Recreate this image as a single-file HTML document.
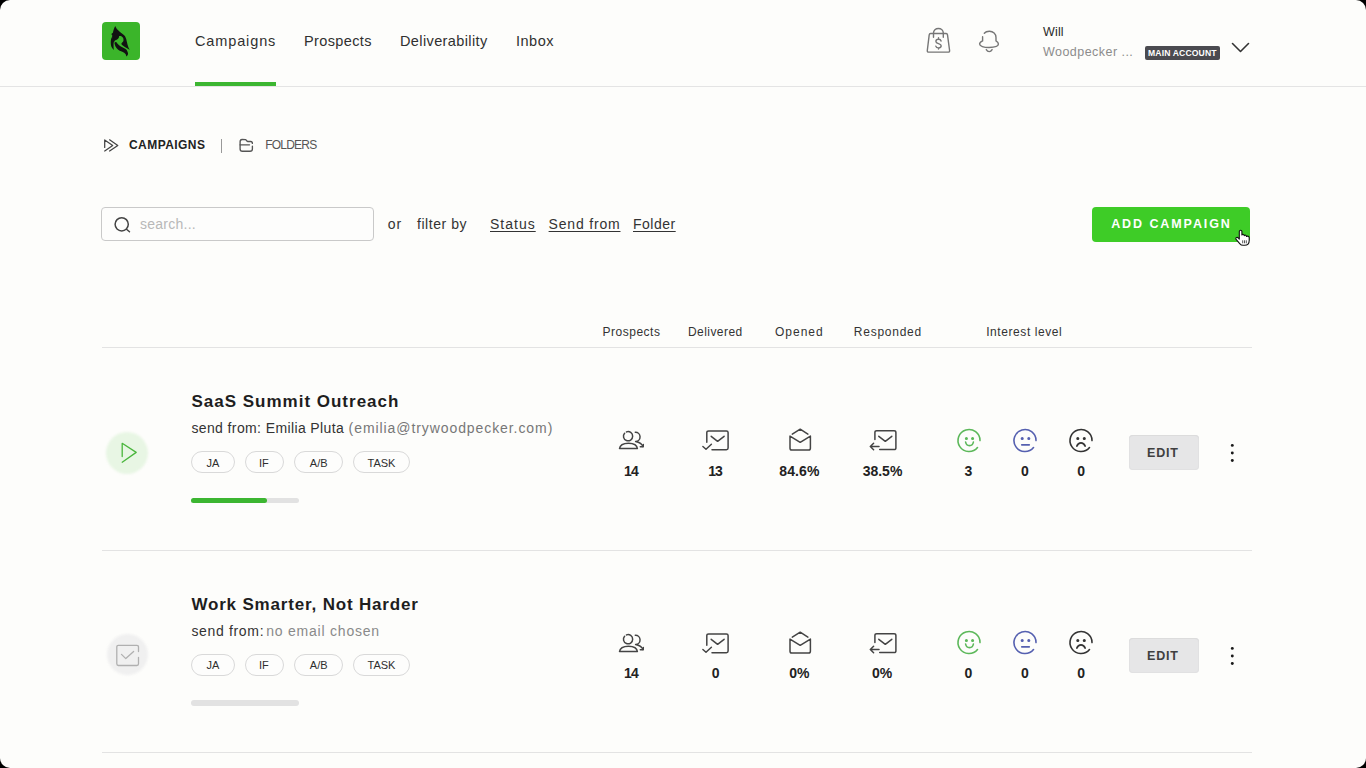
<!DOCTYPE html>
<html><head><meta charset="utf-8"><style>
html{margin:0;padding:0;background:#000;}
body{margin:0;padding:0;width:1366px;height:768px;overflow:hidden;position:relative;border-radius:10px;background:#fdfdfb;font-family:"Liberation Sans",sans-serif;}
.t{position:absolute;white-space:nowrap;line-height:1;}
svg{overflow:visible}
</style></head><body>
<div style="position:absolute;left:102px;top:22px;width:38px;height:38px;border-radius:4px;background:#3bb52a"></div>
<svg style="position:absolute;left:102px;top:22px" width="38" height="38" viewBox="0 0 38 38"><g fill="#121212"><path d="M13.3,4 C14,6 14.8,7 15.7,7.8 C16.8,9 18,10 19.3,10.9 C20.5,11.7 21.5,12.5 22.4,13.5 C23,14.2 23.4,15 23.7,15.7 C24.2,16.8 24.5,17.8 24.6,18.8 C24.9,20 25.2,21.2 25.5,22.4 C26,24.5 26.8,26.5 27.7,28.1 C26.8,27.2 25.7,26.4 24.6,25.9 C23.4,25.2 22.2,24.5 21.1,23.7 C20.4,23.1 19.8,22.5 19.3,21.9 C19.6,21.4 19.9,21 20.2,20.6 C21,19.8 21.5,18.8 21.5,17.9 C21.5,16.8 21.2,15.9 20.6,15.3 C20.1,14.5 19.4,14.1 18.8,14 L17.1,14 C17.1,14.8 16.9,15.6 16.5,16.3 C15.8,17.2 14.7,17.8 13.5,18.3 L11.3,19 L10,15.3 L10.3,13.6 L9.3,12.1 L10.9,10.7 C11.1,9.5 11.4,8.3 11.8,7.3 C12.2,6.1 12.7,5 13.3,4 Z"/><path d="M9.8,15.3 C8.8,17 8.6,19.5 8.9,22.8 C9.1,24.6 10.2,26.7 11.9,27.9 C11.6,26 11.5,25 11.6,24.1 C11.5,22.5 11.5,21 11.8,20.2 C12.1,19.5 12.5,19.1 13,18.7 Z"/><path d="M12.4,20.8 C12.8,24 14.5,26.5 16.2,27.8 C18.2,29.2 20.2,29.7 21.2,30.2 C22.7,31 23.6,31.8 23.8,32.6 L24.4,34.6 C26,33.2 26.4,31.8 25.8,30.6 C25.3,29.2 24.9,28.3 24.2,27.6 C23,26.4 21.6,25.8 20.3,25.3 C18.6,24.4 17.3,23.6 16.3,22.6 C15.6,21.8 15.1,21 14.6,20.4 C14,19.9 13,20.1 12.4,20.8 Z"/></g></svg>
<div style="position:absolute;left:0;top:86px;width:1366px;height:1px;background:#e4e4e4"></div>
<div style="position:absolute;left:195px;top:82px;width:81px;height:4px;background:#3cb631"></div>
<svg style="position:absolute;left:924px;top:26px" width="30" height="30" viewBox="0 0 30 30"><g fill="none" stroke="#767676" stroke-width="1.4" stroke-linecap="round" stroke-linejoin="round"><path d="M6.6,7.5 L22.1,7.5 C22.9,7.5 23.4,8 23.5,8.8 L25.6,24.5 C25.7,25.5 25.2,26.1 24.2,26.1 L4.7,26.1 C3.7,26.1 3.2,25.5 3.3,24.5 L5.2,8.8 C5.3,8 5.8,7.5 6.6,7.5 Z"/><path d="M9.5,11.2 L9.5,7 C9.5,4.4 11.6,2.5 14.4,2.5 C17.2,2.5 19.3,4.4 19.3,7 L19.3,11.2"/><path d="M17.1,15 C16.8,13.9 15.8,13.3 14.5,13.3 C12.9,13.3 11.9,14.1 11.9,15.4 C11.9,18.2 17.2,17 17.2,19.8 C17.2,21.1 16.1,21.9 14.5,21.9 C13.1,21.9 12.1,21.2 11.8,20.1 M14.5,11.7 L14.5,13.3 M14.5,21.9 L14.5,23"/></g></svg>
<svg style="position:absolute;left:976px;top:28px" width="26" height="26" viewBox="0 0 26 26"><g fill="none" stroke="#767676" stroke-width="1.4" stroke-linecap="round"><path d="M8.3,5.2 C9.4,3.9 11.3,3.3 13.4,3.3 C17.2,3.3 20,6 20,9.5 L20,12.8 C21.5,13.6 22.4,14.8 22.4,16.1 C22.4,18.2 18.2,19.5 13,19.5 C7.8,19.5 3.6,18.2 3.6,16.1 C3.6,14.8 4.9,13.6 6.6,12.8 L6.6,8.8"/><path d="M10.3,21.6 C11,22.9 12,23.6 13.2,23.6 C14.4,23.6 15.4,22.9 16.1,21.6"/></g></svg>
<div style="position:absolute;left:1145px;top:46px;width:75px;height:14px;border-radius:2px;background:#4b4b50"></div>
<svg style="position:absolute;left:1230px;top:40px" width="22" height="16" viewBox="0 0 22 16"><path d="M2.5,3.5 L10.5,11.5 L18.5,3.5" fill="none" stroke="#333" stroke-width="1.6" stroke-linecap="round" stroke-linejoin="round"/></svg>
<svg style="position:absolute;left:100px;top:136px" width="22" height="20" viewBox="0 0 22 20"><g fill="none" stroke="#444" stroke-width="1.25" stroke-linecap="round" stroke-linejoin="round"><path d="M4.7,11.4 L4.7,3.9 L12.7,9.4 L4.7,15"/><path d="M9.6,3.8 L17.8,9.4 L9.6,15"/></g></svg>
<div style="position:absolute;left:220.5px;top:139px;width:1.3px;height:14px;background:#999"></div>
<svg style="position:absolute;left:236px;top:136px" width="20" height="20" viewBox="0 0 20 20"><g fill="none" stroke="#555" stroke-width="1.35" stroke-linecap="round" stroke-linejoin="round"><path d="M16.4,7.4 C16.4,6.3 15.8,5.5 14.6,5.5 L11.75,5.5 C11,5.5 10.6,4.1 9.5,3.6 L6.1,3.5 C4.8,3.5 4.1,4.4 4.1,5.8 L4.1,13 C4.1,14.4 4.9,15.2 6.4,15.2 L14,15.2 C15.6,15.2 16.4,14.4 16.4,13 L16.4,10.2"/><path d="M4.1,8.8 L13.5,8.8"/></g></svg>
<div style="position:absolute;left:101px;top:207px;width:271px;height:32px;border:1px solid #c9c9c9;border-radius:4px;background:#fdfdfc"></div>
<svg style="position:absolute;left:110px;top:213px" width="24" height="24" viewBox="0 0 24 24"><g fill="none" stroke="#444" stroke-width="1.5" stroke-linecap="round"><circle cx="11.7" cy="11.3" r="6.6"/><path d="M16.5,16.2 L19.5,18.8"/></g></svg>
<div style="position:absolute;left:1092px;top:207px;width:158px;height:35px;border-radius:4px;background:#3ecc27"></div>
<div style="position:absolute;left:102px;top:347px;width:1150px;height:1px;background:#e3e3e3"></div>
<div style="position:absolute;left:106.4px;top:431.7px;width:42px;height:42px;border-radius:50%;background:#e8f6e4;filter:blur(1px)"></div>
<svg style="position:absolute;left:116px;top:440px" width="26" height="26" viewBox="0 0 26 26"><path d="M6.2,16.6 L6.2,3.3 L20.2,12.4 L6.2,22.2" fill="none" stroke="#4ab63d" stroke-width="1.3" stroke-linecap="round" stroke-linejoin="round"/></svg>
<div style="position:absolute;left:191px;top:451.4px;width:42.0px;height:20px;border:1px solid #d9d9d9;border-radius:11px;background:#fdfdfc"></div>
<div style="position:absolute;left:245px;top:451.4px;width:36.6px;height:20px;border:1px solid #d9d9d9;border-radius:11px;background:#fdfdfc"></div>
<div style="position:absolute;left:294px;top:451.4px;width:47.4px;height:20px;border:1px solid #d9d9d9;border-radius:11px;background:#fdfdfc"></div>
<div style="position:absolute;left:353px;top:451.4px;width:55.0px;height:20px;border:1px solid #d9d9d9;border-radius:11px;background:#fdfdfc"></div>
<div style="position:absolute;left:191px;top:497.8px;width:108px;height:5.4px;border-radius:3px;background:#e2e2e2"></div>
<div style="position:absolute;left:191px;top:497.8px;width:75.5px;height:5.4px;border-radius:3px;background:#3cb631"></div>
<svg style="position:absolute;left:612px;top:424px" width="40" height="32" viewBox="0 0 40 32"><g fill="none" stroke="#444" stroke-width="1.5" stroke-linecap="round" stroke-linejoin="round"><path d="M12.6,9.2 A4.6,4.6 0 1 0 14.5,7.9"/><path d="M7.5,24.6 C8,20.7 11.8,19.2 16.5,19.2 C21.2,19.2 25,20.7 25.4,24.6 Z"/><path d="M23.3,8.3 A4.6,4.6 0 0 1 23.6,17.5 C27,18.2 30,19.8 31,22.6"/><path d="M28.3,22.8 L31.2,22.7 L31.3,20.5"/></g></svg>
<svg style="position:absolute;left:696px;top:424px" width="40" height="32" viewBox="0 0 40 32"><g fill="none" stroke="#444" stroke-width="1.5" stroke-linecap="round" stroke-linejoin="round"><path d="M10.8,18.3 L10.8,8.6 C10.8,7.5 11.6,6.9 12.6,6.9 L30.4,6.9 C31.5,6.9 32.1,7.5 32.1,8.6 L32.1,24.1 C32.1,25.2 31.5,25.8 30.4,25.8 L16,25.8"/><path d="M15.2,12.3 L21.6,17.3 L28.1,12.3"/><path d="M6.9,22.5 L10,25.2 L15.4,20.2"/></g></svg>
<svg style="position:absolute;left:780px;top:424px" width="40" height="32" viewBox="0 0 40 32"><g fill="none" stroke="#444" stroke-width="1.5" stroke-linecap="round" stroke-linejoin="round"><path d="M10,12.1 L10,24.2 C10,25.3 10.8,26 11.8,26 L28.6,26 C29.7,26 30.4,25.3 30.4,24.2 L30.4,12.1 L20.2,18.3 Z"/><path d="M12.3,10.2 L20.2,5.2 L27.9,10.2"/></g></svg>
<svg style="position:absolute;left:863px;top:424px" width="40" height="32" viewBox="0 0 40 32"><g fill="none" stroke="#444" stroke-width="1.5" stroke-linecap="round" stroke-linejoin="round"><path d="M11.9,15.4 L11.9,8.4 C11.9,7.3 12.6,6.7 13.7,6.7 L31.1,6.7 C32.2,6.7 32.9,7.3 32.9,8.4 L32.9,23.9 C32.9,25 32.2,25.6 31.1,25.6 L16.7,25.6"/><path d="M15.8,12.3 L22.3,17.3 L28.8,12.3"/><path d="M16,22.5 L7.3,22.5 M10.6,19.2 L7.3,22.5 L10.6,25.8"/></g></svg>
<svg style="position:absolute;left:954.6px;top:426.5px" width="28" height="28" viewBox="0 0 28 28"><g fill="none" stroke="#5cb85a" stroke-width="1.6" stroke-linecap="round"><path d="M25,13.6 A11,11 0 1 0 22.5,20.5"/><circle cx="11.4" cy="11.5" r="0.75" fill="#5cb85a"/><circle cx="17.6" cy="11.5" r="0.75" fill="#5cb85a"/><path d="M10.6,15 C11,17.6 12.5,18.6 14.5,18.6 C16.5,18.6 18,17.6 18.4,15"/></g></svg>
<svg style="position:absolute;left:1011.0999999999999px;top:426.5px" width="28" height="28" viewBox="0 0 28 28"><g fill="none" stroke="#5560b0" stroke-width="1.6" stroke-linecap="round"><path d="M25,13.6 A11,11 0 1 0 22.5,20.5"/><circle cx="11.2" cy="11.5" r="0.75" fill="#5560b0"/><circle cx="17.8" cy="11.5" r="0.75" fill="#5560b0"/><path d="M10.8,17.8 L18.2,17.8" stroke-width="1.8"/></g></svg>
<svg style="position:absolute;left:1067.4px;top:426.5px" width="28" height="28" viewBox="0 0 28 28"><g fill="none" stroke="#333" stroke-width="1.6" stroke-linecap="round"><path d="M25,13.6 A11,11 0 1 0 22.5,20.5"/><circle cx="10.8" cy="11.5" r="0.75" fill="#333"/><circle cx="17.3" cy="11.5" r="0.75" fill="#333"/><path d="M9.8,19.1 C10.8,16.8 12.4,15.9 14,15.9 C15.6,15.9 17.2,16.8 18.2,19.1"/></g></svg>
<div style="position:absolute;left:1128.6px;top:435.3px;width:70.4px;height:35px;border-radius:4px;background:#e6e6e7;box-shadow:inset 0 1px 0 #dcdcdc,inset 0 0 0 1px #e1e1e2"></div>
<svg style="position:absolute;left:1225px;top:435px" width="15" height="35" viewBox="0 0 15 35"><g fill="#1a1a1a"><circle cx="7.3" cy="10.4" r="1.45"/><circle cx="7.3" cy="18" r="1.45"/><circle cx="7.3" cy="25.5" r="1.45"/></g></svg>
<div style="position:absolute;left:102px;top:549.5px;width:1150px;height:1px;background:#e3e3e3"></div>
<div style="position:absolute;left:106.5px;top:634.2px;width:41px;height:41px;border-radius:50%;background:#f0f0f0;filter:blur(1px)"></div>
<svg style="position:absolute;left:114px;top:638.5px" width="28" height="28" viewBox="0 0 28 28"><g fill="none" stroke="#b0b0b0" stroke-width="1.3" stroke-linecap="round" stroke-linejoin="round"><path d="M24.5,12.5 L24.5,8 C24.5,7 23.9,6.3 22.9,6.3 L4.4,6.3 C3.4,6.3 2.8,7 2.8,8 L2.8,24.8 C2.8,25.8 3.4,26.5 4.4,26.5 L22.9,26.5 C23.9,26.5 24.5,25.8 24.5,24.8 L24.5,18.3"/><path d="M7.5,15.4 L11.8,19.6 L19.6,12.5"/></g></svg>
<div style="position:absolute;left:191px;top:653.9px;width:42.0px;height:20px;border:1px solid #d9d9d9;border-radius:11px;background:#fdfdfc"></div>
<div style="position:absolute;left:245px;top:653.9px;width:36.6px;height:20px;border:1px solid #d9d9d9;border-radius:11px;background:#fdfdfc"></div>
<div style="position:absolute;left:294px;top:653.9px;width:47.4px;height:20px;border:1px solid #d9d9d9;border-radius:11px;background:#fdfdfc"></div>
<div style="position:absolute;left:353px;top:653.9px;width:55.0px;height:20px;border:1px solid #d9d9d9;border-radius:11px;background:#fdfdfc"></div>
<div style="position:absolute;left:191px;top:700.3px;width:108px;height:5.4px;border-radius:3px;background:#e2e2e2"></div>
<svg style="position:absolute;left:612px;top:626.5px" width="40" height="32" viewBox="0 0 40 32"><g fill="none" stroke="#444" stroke-width="1.5" stroke-linecap="round" stroke-linejoin="round"><path d="M12.6,9.2 A4.6,4.6 0 1 0 14.5,7.9"/><path d="M7.5,24.6 C8,20.7 11.8,19.2 16.5,19.2 C21.2,19.2 25,20.7 25.4,24.6 Z"/><path d="M23.3,8.3 A4.6,4.6 0 0 1 23.6,17.5 C27,18.2 30,19.8 31,22.6"/><path d="M28.3,22.8 L31.2,22.7 L31.3,20.5"/></g></svg>
<svg style="position:absolute;left:696px;top:626.5px" width="40" height="32" viewBox="0 0 40 32"><g fill="none" stroke="#444" stroke-width="1.5" stroke-linecap="round" stroke-linejoin="round"><path d="M10.8,18.3 L10.8,8.6 C10.8,7.5 11.6,6.9 12.6,6.9 L30.4,6.9 C31.5,6.9 32.1,7.5 32.1,8.6 L32.1,24.1 C32.1,25.2 31.5,25.8 30.4,25.8 L16,25.8"/><path d="M15.2,12.3 L21.6,17.3 L28.1,12.3"/><path d="M6.9,22.5 L10,25.2 L15.4,20.2"/></g></svg>
<svg style="position:absolute;left:780px;top:626.5px" width="40" height="32" viewBox="0 0 40 32"><g fill="none" stroke="#444" stroke-width="1.5" stroke-linecap="round" stroke-linejoin="round"><path d="M10,12.1 L10,24.2 C10,25.3 10.8,26 11.8,26 L28.6,26 C29.7,26 30.4,25.3 30.4,24.2 L30.4,12.1 L20.2,18.3 Z"/><path d="M12.3,10.2 L20.2,5.2 L27.9,10.2"/></g></svg>
<svg style="position:absolute;left:863px;top:626.5px" width="40" height="32" viewBox="0 0 40 32"><g fill="none" stroke="#444" stroke-width="1.5" stroke-linecap="round" stroke-linejoin="round"><path d="M11.9,15.4 L11.9,8.4 C11.9,7.3 12.6,6.7 13.7,6.7 L31.1,6.7 C32.2,6.7 32.9,7.3 32.9,8.4 L32.9,23.9 C32.9,25 32.2,25.6 31.1,25.6 L16.7,25.6"/><path d="M15.8,12.3 L22.3,17.3 L28.8,12.3"/><path d="M16,22.5 L7.3,22.5 M10.6,19.2 L7.3,22.5 L10.6,25.8"/></g></svg>
<svg style="position:absolute;left:954.6px;top:629.0px" width="28" height="28" viewBox="0 0 28 28"><g fill="none" stroke="#5cb85a" stroke-width="1.6" stroke-linecap="round"><path d="M25,13.6 A11,11 0 1 0 22.5,20.5"/><circle cx="11.4" cy="11.5" r="0.75" fill="#5cb85a"/><circle cx="17.6" cy="11.5" r="0.75" fill="#5cb85a"/><path d="M10.6,15 C11,17.6 12.5,18.6 14.5,18.6 C16.5,18.6 18,17.6 18.4,15"/></g></svg>
<svg style="position:absolute;left:1011.0999999999999px;top:629.0px" width="28" height="28" viewBox="0 0 28 28"><g fill="none" stroke="#5560b0" stroke-width="1.6" stroke-linecap="round"><path d="M25,13.6 A11,11 0 1 0 22.5,20.5"/><circle cx="11.2" cy="11.5" r="0.75" fill="#5560b0"/><circle cx="17.8" cy="11.5" r="0.75" fill="#5560b0"/><path d="M10.8,17.8 L18.2,17.8" stroke-width="1.8"/></g></svg>
<svg style="position:absolute;left:1067.4px;top:629.0px" width="28" height="28" viewBox="0 0 28 28"><g fill="none" stroke="#333" stroke-width="1.6" stroke-linecap="round"><path d="M25,13.6 A11,11 0 1 0 22.5,20.5"/><circle cx="10.8" cy="11.5" r="0.75" fill="#333"/><circle cx="17.3" cy="11.5" r="0.75" fill="#333"/><path d="M9.8,19.1 C10.8,16.8 12.4,15.9 14,15.9 C15.6,15.9 17.2,16.8 18.2,19.1"/></g></svg>
<div style="position:absolute;left:1128.6px;top:637.8px;width:70.4px;height:35px;border-radius:4px;background:#e6e6e7;box-shadow:inset 0 1px 0 #dcdcdc,inset 0 0 0 1px #e1e1e2"></div>
<svg style="position:absolute;left:1225px;top:637.5px" width="15" height="35" viewBox="0 0 15 35"><g fill="#1a1a1a"><circle cx="7.3" cy="10.4" r="1.45"/><circle cx="7.3" cy="18" r="1.45"/><circle cx="7.3" cy="25.5" r="1.45"/></g></svg>
<div style="position:absolute;left:102px;top:752px;width:1150px;height:1px;background:#e3e3e3"></div>
<svg style="position:absolute;left:1230px;top:226px" width="26" height="24" viewBox="0 0 26 24"><path d="M9.3,5.6 C9.3,4.8 9.9,4.3 10.6,4.3 C11.3,4.3 11.9,4.8 11.9,5.6 L11.9,9 C12.2,8.5 12.8,8.3 13.4,8.5 C13.9,8.7 14.2,9.1 14.2,9.6 C14.5,9.2 15.1,9 15.7,9.3 C16.2,9.5 16.5,10 16.5,10.5 C16.9,10.1 17.6,10 18.2,10.3 C18.8,10.6 19.2,11.1 19.2,11.7 L19.2,14.5 C19.2,17.1 17.5,19.3 14.7,19.3 L13.1,19.3 C11.6,19.3 10.6,18.7 9.7,17.6 L6.1,13.4 C5.6,12.8 5.7,12 6.3,11.6 C6.9,11.2 7.7,11.4 8.2,11.9 L9.3,13.1 Z" fill="#fff" stroke="#111" stroke-width="1.1" stroke-linejoin="round"/><path d="M12.7,14.3 L12.7,17.3 M14.5,14.3 L14.5,17.3 M16.3,14.3 L16.3,17.3" stroke="#444" stroke-width="0.9"/></svg>
<div class="t" id="nav1" style="left:195.00px;top:33.73px;font-size:14.5px;font-weight:400;color:#303030;letter-spacing:0.875px;">Campaigns</div>
<div class="t" id="nav2" style="left:304.00px;top:33.73px;font-size:14.5px;font-weight:400;color:#303030;letter-spacing:0.375px;">Prospects</div>
<div class="t" id="nav3" style="left:400.00px;top:33.73px;font-size:14.5px;font-weight:400;color:#303030;letter-spacing:0.385px;">Deliverability</div>
<div class="t" id="nav4" style="left:516.00px;top:33.73px;font-size:14.5px;font-weight:400;color:#303030;letter-spacing:0.500px;">Inbox</div>
<div class="t" id="will" style="left:1043.00px;top:25.92px;font-size:12.5px;font-weight:400;color:#2a2a2a;letter-spacing:0.167px;">Will</div>
<div class="t" id="wood" style="left:1043.00px;top:46.02px;font-size:12.5px;font-weight:400;color:#8c8c8c;letter-spacing:0.462px;">Woodpecker ...</div>
<div class="t" id="badge" style="left:1148.00px;top:49.32px;font-size:8.6px;font-weight:700;color:#ffffff;letter-spacing:0.136px;">MAIN ACCOUNT</div>
<div class="t" id="bc1" style="left:129.00px;top:139.34px;font-size:12px;font-weight:700;color:#222;letter-spacing:0.437px;">CAMPAIGNS</div>
<div class="t" id="bc2" style="left:265.20px;top:139.34px;font-size:12px;font-weight:400;color:#555;letter-spacing:-0.767px;">FOLDERS</div>
<div class="t" id="ph" style="left:140.00px;top:217.35px;font-size:14px;font-weight:400;color:#b8b8b8;letter-spacing:0.250px;">search...</div>
<div class="t" id="or" style="left:387.80px;top:217.15px;font-size:14px;font-weight:400;color:#333;letter-spacing:1.000px;">or</div>
<div class="t" id="fb" style="left:417.00px;top:217.15px;font-size:14px;font-weight:400;color:#333;letter-spacing:0.562px;">filter by</div>
<div class="t" id="st" style="left:490.00px;top:217.15px;font-size:14px;font-weight:400;color:#333;letter-spacing:1.000px;text-decoration:underline;text-underline-offset:2px;text-decoration-thickness:1px;">Status</div>
<div class="t" id="sf" style="left:548.60px;top:217.15px;font-size:14px;font-weight:400;color:#333;letter-spacing:0.812px;text-decoration:underline;text-underline-offset:2px;text-decoration-thickness:1px;">Send from</div>
<div class="t" id="fo" style="left:633.00px;top:217.15px;font-size:14px;font-weight:400;color:#333;letter-spacing:0.500px;text-decoration:underline;text-underline-offset:2px;text-decoration-thickness:1px;">Folder</div>
<div class="t" id="add" style="left:1111.20px;top:218.42px;font-size:12.5px;font-weight:700;color:#ffffff;letter-spacing:1.909px;">ADD CAMPAIGN</div>
<div class="t" id="h1" style="left:602.60px;top:325.84px;font-size:12px;font-weight:400;color:#333;letter-spacing:0.500px;">Prospects</div>
<div class="t" id="h2" style="left:688.00px;top:325.84px;font-size:12px;font-weight:400;color:#333;letter-spacing:0.437px;">Delivered</div>
<div class="t" id="h3" style="left:775.00px;top:325.84px;font-size:12px;font-weight:400;color:#333;letter-spacing:1.000px;">Opened</div>
<div class="t" id="h4" style="left:853.80px;top:325.84px;font-size:12px;font-weight:400;color:#333;letter-spacing:0.750px;">Responded</div>
<div class="t" id="h5" style="left:986.20px;top:325.84px;font-size:12px;font-weight:400;color:#333;letter-spacing:0.577px;">Interest level</div>
<div class="t" id="r0t" style="left:191.40px;top:392.61px;font-size:17px;font-weight:700;color:#1e1e1e;letter-spacing:1.000px;">SaaS Summit Outreach</div>
<div class="t" id="r0sa" style="left:191.40px;top:421.45px;font-size:14px;font-weight:400;color:#333;letter-spacing:0.386px;">send from: Emilia Pluta</div>
<div class="t" id="r0sb" style="left:348.60px;top:421.45px;font-size:14px;font-weight:400;color:#777;letter-spacing:0.920px;">(emilia@trywoodpecker.com)</div>
<div class="t" id="r0p0" style="left:213.00px;top:457.99px;font-size:11px;font-weight:400;color:#2e2e2e;letter-spacing:0.000px;transform:translateX(-50%);">JA</div>
<div class="t" id="r0p1" style="left:263.80px;top:457.99px;font-size:11px;font-weight:400;color:#2e2e2e;letter-spacing:0.000px;transform:translateX(-50%);">IF</div>
<div class="t" id="r0p2" style="left:318.70px;top:457.99px;font-size:11px;font-weight:400;color:#2e2e2e;letter-spacing:0.000px;transform:translateX(-50%);">A/B</div>
<div class="t" id="r0p3" style="left:381.50px;top:457.99px;font-size:11px;font-weight:400;color:#2e2e2e;letter-spacing:0.000px;transform:translateX(-50%);">TASK</div>
<div class="t" id="r0n0" style="left:631.00px;top:463.75px;font-size:14px;font-weight:700;color:#222;letter-spacing:-0.900px;transform:translateX(-50%);">14</div>
<div class="t" id="r0n1" style="left:715.10px;top:463.75px;font-size:14px;font-weight:700;color:#222;letter-spacing:-0.900px;transform:translateX(-50%);">13</div>
<div class="t" id="r0n2" style="left:799.40px;top:463.75px;font-size:14px;font-weight:700;color:#222;letter-spacing:0.125px;transform:translateX(-50%);">84.6%</div>
<div class="t" id="r0n3" style="left:882.50px;top:463.75px;font-size:14px;font-weight:700;color:#222;letter-spacing:-0.000px;transform:translateX(-50%);">38.5%</div>
<div class="t" id="r0n4" style="left:968.50px;top:463.75px;font-size:14px;font-weight:700;color:#222;letter-spacing:0.000px;transform:translateX(-50%);">3</div>
<div class="t" id="r0n5" style="left:1024.90px;top:463.75px;font-size:14px;font-weight:700;color:#222;letter-spacing:0.000px;transform:translateX(-50%);">0</div>
<div class="t" id="r0n6" style="left:1081.20px;top:463.75px;font-size:14px;font-weight:700;color:#222;letter-spacing:0.000px;transform:translateX(-50%);">0</div>
<div class="t" id="r0e" style="left:1162.90px;top:447.42px;font-size:12.5px;font-weight:700;color:#404040;letter-spacing:0.833px;transform:translateX(-50%);">EDIT</div>
<div class="t" id="r1t" style="left:191.40px;top:595.61px;font-size:17px;font-weight:700;color:#1e1e1e;letter-spacing:0.826px;">Work Smarter, Not Harder</div>
<div class="t" id="r1sa" style="left:191.40px;top:623.95px;font-size:14px;font-weight:400;color:#333;letter-spacing:0.667px;">send from:</div>
<div class="t" id="r1sb" style="left:266.20px;top:623.95px;font-size:14px;font-weight:400;color:#8a8a8a;letter-spacing:0.786px;">no email chosen</div>
<div class="t" id="r1p0" style="left:213.00px;top:660.49px;font-size:11px;font-weight:400;color:#2e2e2e;letter-spacing:0.000px;transform:translateX(-50%);">JA</div>
<div class="t" id="r1p1" style="left:263.80px;top:660.49px;font-size:11px;font-weight:400;color:#2e2e2e;letter-spacing:0.000px;transform:translateX(-50%);">IF</div>
<div class="t" id="r1p2" style="left:318.70px;top:660.49px;font-size:11px;font-weight:400;color:#2e2e2e;letter-spacing:0.000px;transform:translateX(-50%);">A/B</div>
<div class="t" id="r1p3" style="left:381.50px;top:660.49px;font-size:11px;font-weight:400;color:#2e2e2e;letter-spacing:0.000px;transform:translateX(-50%);">TASK</div>
<div class="t" id="r1n0" style="left:631.00px;top:666.25px;font-size:14px;font-weight:700;color:#222;letter-spacing:-0.900px;transform:translateX(-50%);">14</div>
<div class="t" id="r1n1" style="left:715.60px;top:666.25px;font-size:14px;font-weight:700;color:#222;letter-spacing:0.000px;transform:translateX(-50%);">0</div>
<div class="t" id="r1n2" style="left:799.40px;top:666.25px;font-size:14px;font-weight:700;color:#222;letter-spacing:0.000px;transform:translateX(-50%);">0%</div>
<div class="t" id="r1n3" style="left:882.00px;top:666.25px;font-size:14px;font-weight:700;color:#222;letter-spacing:0.000px;transform:translateX(-50%);">0%</div>
<div class="t" id="r1n4" style="left:968.50px;top:666.25px;font-size:14px;font-weight:700;color:#222;letter-spacing:0.000px;transform:translateX(-50%);">0</div>
<div class="t" id="r1n5" style="left:1024.90px;top:666.25px;font-size:14px;font-weight:700;color:#222;letter-spacing:0.000px;transform:translateX(-50%);">0</div>
<div class="t" id="r1n6" style="left:1081.20px;top:666.25px;font-size:14px;font-weight:700;color:#222;letter-spacing:0.000px;transform:translateX(-50%);">0</div>
<div class="t" id="r1e" style="left:1162.90px;top:649.92px;font-size:12.5px;font-weight:700;color:#404040;letter-spacing:0.833px;transform:translateX(-50%);">EDIT</div>
</body></html>
